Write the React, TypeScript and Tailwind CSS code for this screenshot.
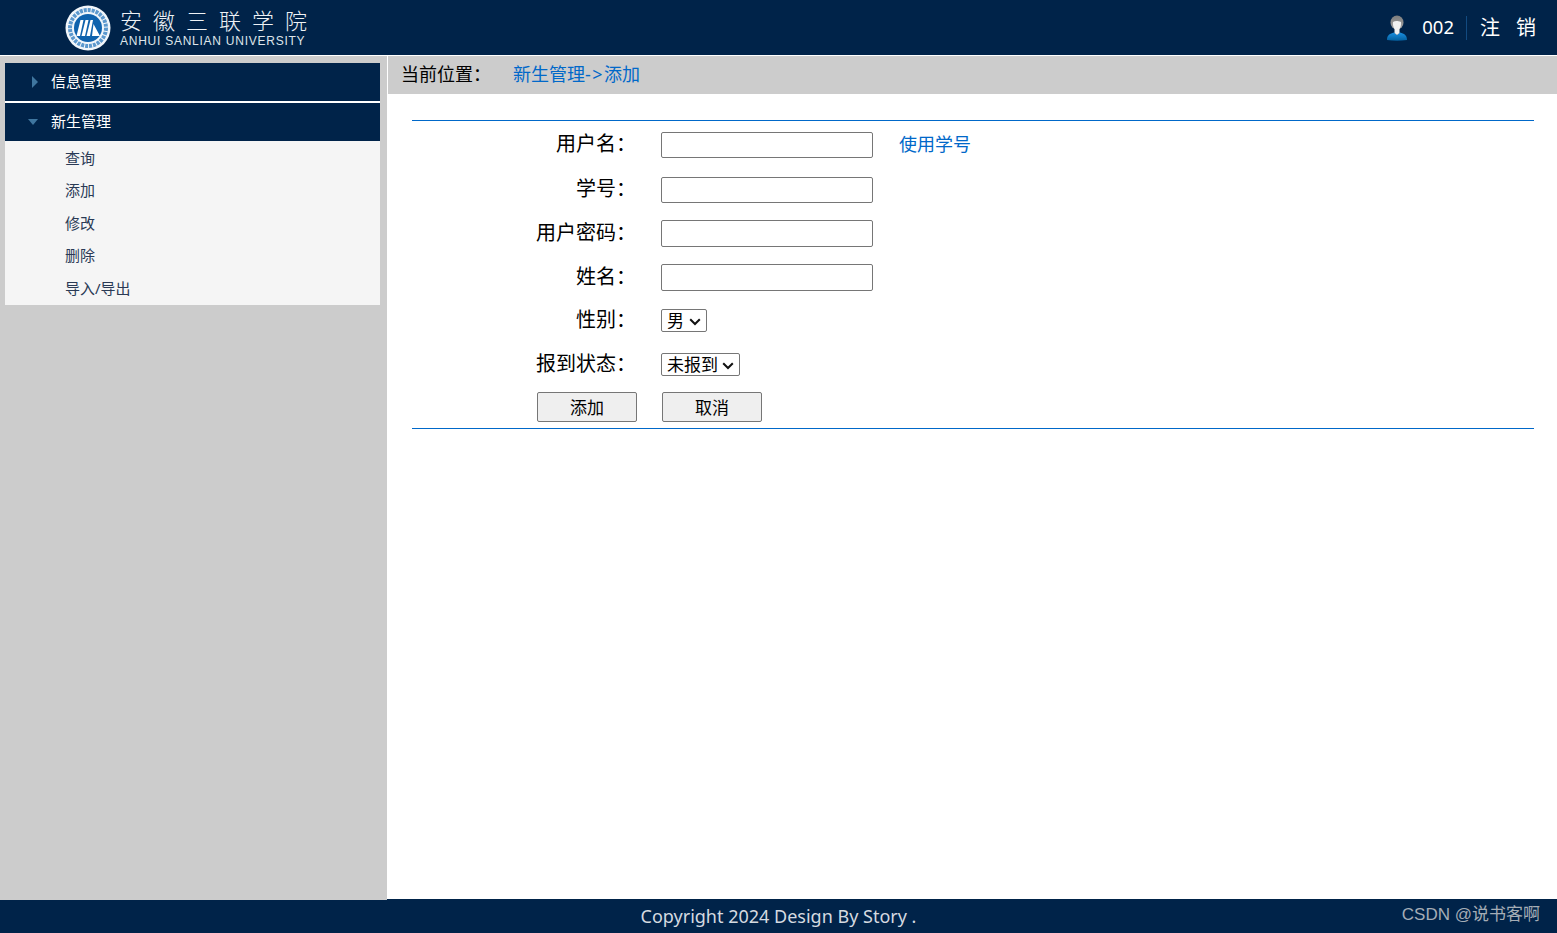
import React from "react";

const cjk = "font-['Noto_Sans','Noto_Sans_CJK_SC',sans-serif]";

const Logo = () => (
  <div className="flex items-center">
    <svg width="46" height="46" viewBox="0 0 46 46" className="ml-[65px] shrink-0">
      <circle cx="23" cy="23" r="22.5" fill="#f2f6fa" />
      <circle cx="23" cy="23" r="18" fill="none" stroke="#2a78bd" strokeWidth="4" strokeDasharray="3 1" opacity="0.75" />
      <circle cx="23" cy="23" r="15.5" fill="#f2f6fa" />
      <circle cx="23" cy="23" r="14" fill="#0f62ad" />
      <path d="M11.5 31 L15.5 15 H18.5 L15 31 Z M16.5 31 L20.5 15 H23.5 L20 31 Z M21.5 31 L25.5 15 H28 L25 31 Z M27 31 L28.5 19 L35 31 Z" fill="#ffffff" />
    </svg>
    <div className="ml-[9px] mt-[2px] flex flex-col gap-[6px] w-[190px]">
      <span className="h-[18px] text-[22px] leading-[18px] tracking-[11px] font-light whitespace-nowrap text-[#eef2f5] font-['Noto_Sans_CJK_SC',sans-serif]">
        安徽三联学院
      </span>
      <span className="text-[12px] leading-[14px] tracking-[0.75px] whitespace-nowrap text-[#dfe5ea] font-['Liberation_Sans',sans-serif]">
        ANHUI SANLIAN UNIVERSITY
      </span>
    </div>
  </div>
);

const Avatar = () => (
  <svg width="22" height="26" viewBox="0 0 22 26">
    <defs>
      <linearGradient id="hair" x1="0" y1="0" x2="0" y2="1">
        <stop offset="0" stopColor="#7d7d7d" />
        <stop offset="1" stopColor="#a5a5a5" />
      </linearGradient>
      <linearGradient id="body" x1="0" y1="0" x2="0" y2="1">
        <stop offset="0" stopColor="#1a8fe0" />
        <stop offset="1" stopColor="#04609f" />
      </linearGradient>
    </defs>
    <path d="M1 25 C1 20 4 18.5 8 17.5 L11 20 L14 17.5 C18 18.5 21 20 21 25 Q11 26.5 1 25 Z" fill="url(#body)" />
    <ellipse cx="11" cy="7.5" rx="6.5" ry="7" fill="url(#hair)" />
    <path d="M7 7 C9 6 11 5.5 15 7 C15.5 11 13.5 14 13.5 14 L13.5 18 L11 20 L8.5 18 L8.5 14 C8.5 14 6.5 11 7 7 Z" fill="#f1f1f1" />
  </svg>
);

const Header = () => (
  <header className="h-[56px] shrink-0 flex items-center justify-between bg-[#002349] border-b border-white text-white">
    <Logo />
    <div className={`flex items-center ${cjk}`}>
      <Avatar />
      <span className="ml-[14px] text-[18.5px] leading-none">002</span>
      <span className="ml-[12px] w-px h-[24px] bg-[#124a80]"></span>
      <span className="ml-[13px] text-[20px] leading-none">注</span>
      <span className="ml-[16px] mr-[21px] text-[20px] leading-none">销</span>
    </div>
  </header>
);

const subItems = ["查询", "添加", "修改", "删除", "导入/导出"];

const Sidebar = () => (
  <aside className="relative w-[387px] shrink-0 -mb-px bg-[#cccccc] pt-[7px] pl-[5px] pr-[7px]">
    <div className="h-[38px] flex items-center bg-[#002349] text-white text-[15px]">
      <svg width="8" height="12" viewBox="0 0 8 12" className="ml-[26px] mr-[12px]">
        <path d="M1 0 L7 6 L1 12 Z" fill="#3f769f" />
      </svg>
      <span className="-mt-[2px]">信息管理</span>
    </div>
    <div className="h-[2px] bg-white"></div>
    <div className="h-[38px] flex items-center bg-[#002349] text-white text-[15px]">
      <svg width="10" height="6" viewBox="0 0 10 6" className="ml-[23px] mr-[13px] -mt-px">
        <path d="M0 0 H10 L5 6 Z" fill="#3f769f" />
      </svg>
      <span className="-mt-[2px]">新生管理</span>
    </div>
    <ul className="bg-[#f5f5f5] h-[164px] flex flex-col pt-[0.6px]">
      {subItems.map((item) => (
        <li key={item} className="h-[32.5px] flex items-center pl-[60px] text-[15px] text-[#2a3a55]">
          {item}
        </li>
      ))}
    </ul>
  </aside>
);

const Label = ({ children }: { children: React.ReactNode }) => (
  <label className="w-[224px] shrink-0 -mt-[2px] text-right text-[20px] leading-none text-black">
    {children}
  </label>
);

const TextInput = ({ h }: { h: string }) => (
  <input
    type="text"
    className={`${h} w-[212px] ml-[25px] border border-[#767676] rounded-[2px] bg-white`}
  />
);

const Select = ({ value, w }: { value: string; w: string }) => (
  <div className={`relative ml-[25px] h-[23px] ${w}`}>
    <select className="w-full h-full appearance-none pl-[5px] text-[17px] leading-none border border-[#767676] rounded-[2px] bg-white">
      <option>{value}</option>
    </select>
    <svg width="12" height="8" viewBox="0 0 12 8" className="absolute right-[6px] top-[9px] pointer-events-none">
      <path d="M1.2 1.2 L6 6 L10.8 1.2" fill="none" stroke="#111111" strokeWidth="2" />
    </svg>
  </div>
);

const AddForm = () => (
  <div className="mx-[24px] mt-[26px] mr-[23px] border-y border-[#0068c9] h-[309px] flex flex-col text-black">
    <div className="mt-[11px] flex items-center h-[26px]">
      <Label>用户名：</Label>
      <TextInput h="h-[26px]" />
      <a className="ml-[26px] -mt-[2px] text-[18px] text-[#0068c9]">使用学号</a>
    </div>
    <div className="mt-[19px] flex items-center h-[26px]">
      <Label>学号：</Label>
      <TextInput h="h-[26px]" />
    </div>
    <div className="mt-[17px] flex items-center h-[27px]">
      <Label>用户密码：</Label>
      <TextInput h="h-[27px]" />
    </div>
    <div className="mt-[17px] flex items-center h-[27px]">
      <Label>姓名：</Label>
      <TextInput h="h-[27px]" />
    </div>
    <div className="mt-[18px] flex items-center h-[23px]">
      <Label>性别：</Label>
      <Select value="男" w="w-[46px]" />
    </div>
    <div className="mt-[21px] flex items-center h-[23px]">
      <Label>报到状态：</Label>
      <Select value="未报到" w="w-[79px]" />
    </div>
    <div className="mt-[16px] flex h-[30px] pl-[125px] gap-[25px]">
      <button className="w-[100px] h-[30px] pt-[2px] text-[17px] border border-[#767676] rounded-[2px] bg-[#efefef]">添加</button>
      <button className="w-[100px] h-[30px] pt-[2px] text-[17px] border border-[#767676] rounded-[2px] bg-[#efefef]">取消</button>
    </div>
  </div>
);

const Main = () => (
  <main className="flex-1 ml-px bg-white">
    <div className="h-[38px] flex items-center bg-[#cccccc] pl-[13px] pb-[2px] text-[18px]">
      <span className="w-[112px] text-black">当前位置：</span>
      <span className="text-[#0068c9]">
        新生管理<span className="tracking-[1.5px]">-&gt;</span>添加
      </span>
    </div>
    <AddForm />
  </main>
);

const App = () => {
  return (
    <div className={`relative w-[1557px] h-[933px] overflow-hidden flex flex-col bg-white ${cjk}`}>
      <Header />
      <div className="flex-1 flex min-h-0">
        <Sidebar />
        <Main />
      </div>
      <footer className="h-[34px] shrink-0 flex items-center justify-center bg-[#002349] text-[18px] text-[#d5dae0]">
        Copyright 2024 Design By Story .
      </footer>
      <span className="absolute right-[17px] bottom-[10px] text-[17px] leading-none text-[#a5adb6] font-['Liberation_Sans','Noto_Sans_CJK_SC',sans-serif]">
        CSDN @说书客啊
      </span>
    </div>
  );
};

export default App;
